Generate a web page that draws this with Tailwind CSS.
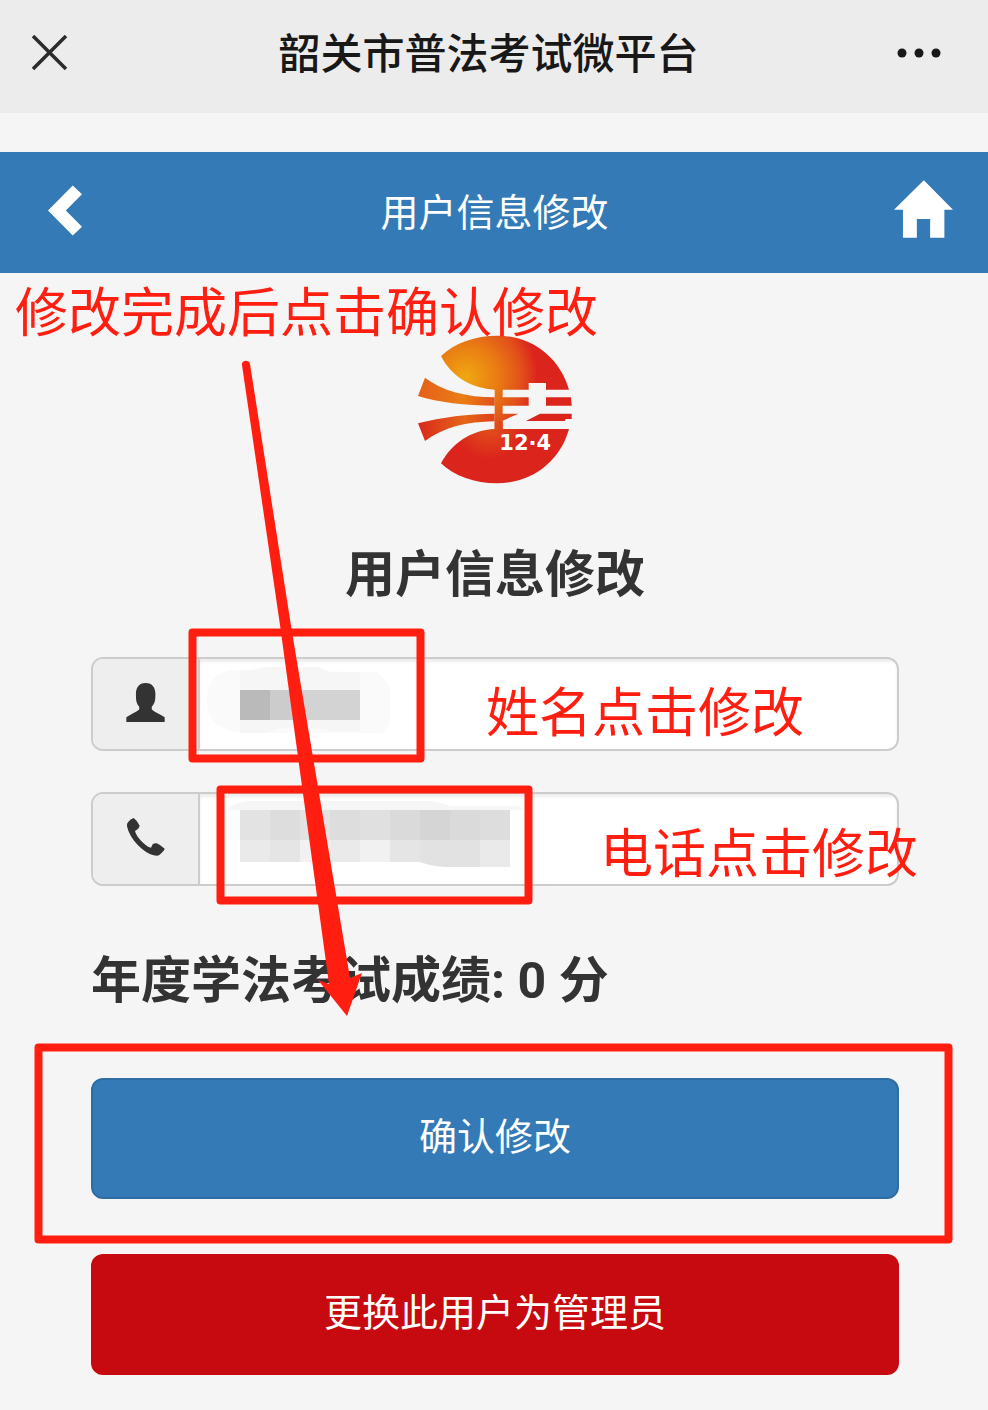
<!DOCTYPE html>
<html lang="zh-CN">
<head>
<meta charset="utf-8">
<meta name="viewport" content="width=device-width, initial-scale=1">
<title>韶关市普法考试微平台</title>
<script src="https://cdn.jsdelivr.net/npm/@tailwindcss/browser@4"></script>
</head>
<body class="relative min-h-screen overflow-x-hidden bg-[#f5f5f5] pb-9 font-['Roboto','Noto_Sans_CJK_SC',sans-serif] text-[#333333]">

  <header class="flex h-[113px] items-center justify-between bg-[#ececec] pr-[47px] pb-2 pl-8">
    <button type="button" aria-label="关闭" class="w-12">
      <svg class="size-9" viewBox="0 0 36 36" fill="none" stroke="#2b2b2b" stroke-width="3.500"><path d="M1 1 34 34M34 1 1 34"/></svg>
    </button>
    <p class="pt-1 text-[42px] leading-[48px] font-medium text-[#181818]">韶关市普法考试微平台</p>
    <button type="button" aria-label="更多">
      <svg class="h-3 w-11" viewBox="0 0 44 12" fill="#181818"><circle cx="5" cy="6" r="4.5"/><circle cx="22" cy="6" r="4.5"/><circle cx="39" cy="6" r="4.5"/></svg>
    </button>
  </header>

  <nav class="mt-[39px] flex h-[121px] items-center justify-between bg-[#337ab7] pr-[35px] pb-1 pl-12 text-white">
    <a href="#" aria-label="返回" class="w-[59px]">
      <svg class="h-[51px] w-[34px]" viewBox="0 0 103 152" fill="currentColor"><path d="M75 0 103 27 54 76 103 125 75 152 0 76Z"/></svg>
    </a>
    <h1 class="pt-1 pr-3 text-[38px] leading-none">用户信息修改</h1>
    <a href="#" aria-label="首页" class="pb-1">
      <svg class="h-[58px] w-[59px]" viewBox="0 0 178 173" fill="currentColor"><path d="M90 0 178 89H152V173H109V117H69V173H27V89H0Z"/></svg>
    </a>
  </nav>

  <main class="pt-[47px] pr-[89px] pl-[91px]">
    <svg class="mx-auto h-[180px] w-[190px]" viewBox="0 0 570 540" role="img" aria-label="12·4 普法">
      <defs>
        <radialGradient id="sun" gradientUnits="userSpaceOnUse" cx="198" cy="170" r="215">
          <stop offset="0" stop-color="#f0a812"/><stop offset=".45" stop-color="#e97b13"/><stop offset=".78" stop-color="#e2501a"/><stop offset="1" stop-color="#db241c"/>
        </radialGradient>
        <linearGradient id="ray" x1="0" x2="1"><stop offset="0" stop-color="#e5601a"/><stop offset=".6" stop-color="#ea7d15"/><stop offset="1" stop-color="#e2501a"/></linearGradient>
        <linearGradient id="ray2" x1="0" x2="1"><stop offset="0" stop-color="#da281c"/><stop offset=".6" stop-color="#e56518"/><stop offset="1" stop-color="#df421a"/></linearGradient>
        <radialGradient id="base" gradientUnits="userSpaceOnUse" cx="270" cy="310" r="110"><stop offset="0" stop-color="#e2551a"/><stop offset="1" stop-color="#db241c"/></radialGradient>
      </defs>
      <path fill="url(#sun)" d="M123 108C165 68 225 47 293 47C395 47 480 113 507 209H438V189H386V209H308V232H386V257H308V281H355L308 302V327H284V209C215 205 155 171 123 108Z"/>
      <path fill="url(#ray)" d="M75 173C125 212 200 232 284 232V257C195 257 115 247 54 228Z"/>
      <path fill="url(#ray2)" d="M54 310C125 291 205 282 284 281V304C200 305 130 322 75 363Z"/>
      <path fill="#db241c" d="M438 232H513L515 257H438ZM420 281H515V297H497L494 303H378Z"/>
      <path fill="url(#base)" d="M284 304H308V327H507C480 425 395 490 290 490C225 490 162 468 123 430C155 370 213 330 284 327Z"/>
      <text x="298" y="391" fill="#ffffff" class="font-['DejaVu_Sans',sans-serif] text-[63px] font-bold">12·4</text>
    </svg>

    <h2 class="mt-[50px] text-center text-[50px] leading-[50px] font-bold">用户信息修改</h2>

    <form class="mt-[57px]">
      <div class="flex h-[94px] overflow-hidden rounded-xl border-2 border-[#cccccc] bg-white">
        <label for="name" class="flex w-[107px] items-center justify-center border-r-2 border-[#cccccc] bg-[#eeeeee] pb-1">
          <svg class="size-[39px]" viewBox="0 0 116 118" fill="#333333" role="img" aria-label="姓名"><path d="M58 0C79 0 88 14 88 34C88 53 86 62 77 72V80C89 91 103 94 116 104V118H0V104C13 94 29 89 39 80V72C30 62 29 51 29 34C29 14 38 0 58 0Z"/></svg>
        </label>
        <input id="name" type="text" class="min-w-0 flex-1 px-6 text-[38px] shadow-[inset_0_3px_3px_rgba(0,0,0,0.075)] outline-none">
      </div>

      <div class="mt-[41px] flex h-[94px] overflow-hidden rounded-xl border-2 border-[#cccccc] bg-white">
        <label for="phone" class="flex w-[107px] items-center justify-center border-r-2 border-[#cccccc] bg-[#eeeeee] pb-1">
          <svg class="size-[38px]" viewBox="0 0 114 114" fill="#333333" role="img" aria-label="电话"><path d="M20 0Q31 8 38 23Q37 31 24 39Q27 52 42 68Q59 86 72 89L77 79Q84 74 89 76Q101 81 113 92Q112 98 97 111Q92 115 77 111Q57 106 33 82Q6 54 0 25Q-1 17 3 13Q10 3 20 0Z"/></svg>
        </label>
        <input id="phone" type="tel" class="min-w-0 flex-1 px-6 text-[38px] shadow-[inset_0_3px_3px_rgba(0,0,0,0.075)] outline-none">
      </div>

      <p class="mt-[70px] text-[50px] leading-[50px] font-bold">年度学法考试成绩: 0 分</p>

      <button type="submit" class="mt-[72px] block h-[121px] w-full rounded-xl border-2 border-[#2e6da4] bg-[#337ab7] pb-0.5 text-[38px] text-white">确认修改</button>
      <button type="button" class="mt-[55px] block h-[121px] w-full rounded-xl bg-[#c70a10] pb-0.5 text-[38px] text-white">更换此用户为管理员</button>
    </form>
  </main>

  <!-- Annotation layer: masked values, highlight frames, arrow and notes -->
  <div class="pointer-events-none absolute top-0 left-0 h-[1410px] w-[988px] font-['Noto_Sans_CJK_SC',sans-serif] text-[53px] leading-[54px] whitespace-nowrap text-[#ff1e10]">
    <svg class="absolute inset-0 size-full" viewBox="0 0 988 1410" aria-hidden="true">
      <path fill="#fafafa" d="M240 670C216 669 207 682 207 702C207 720 220 731 244 733H382L390 725V687L378 672Z"/>
      <path fill="#f6f6f6" d="M240 670H252Q262 667 270 667H318Q326 670 330 672H360V731H330Q316 728 308 728H280Q272 731 264 733H240Z"/>
      <path fill="#bababa" d="M240 690h30v30h-30z"/>
      <path fill="#cccccc" d="M270 690h30v30h-30z"/>
      <path fill="#d3d3d3" d="M300 690h60v30h-60z"/>
      <path fill="#f6f6f6" d="M227 810Q235 801 250 801H430Q441 802 450 806H518L524 810Z"/>
      <path fill="#fcfcfc" d="M225 810h15v30h-15z"/>
      <path fill="#e3e3e3" d="M240 810h30v30h-30zM300 810h30v30h-30z"/>
      <path fill="#dddddd" d="M270 810h30v30h-30zM330 810h30v30h-30zM480 810h30v30h-30z"/>
      <path fill="#e0e0e0" d="M360 810h30v30h-30z"/>
      <path fill="#dadada" d="M390 810h30v30h-30zM450 810h30v30h-30z"/>
      <path fill="#d5d5d5" d="M420 810h30v30h-30z"/>
      <path fill="#eaeaea" d="M240 840h30v22h-30zM330 840h30v22h-30zM480 840h30v27h-30z"/>
      <path fill="#e5e5e5" d="M270 840h30v22h-30zM390 840h30v22h-30z"/>
      <path fill="#f1f1f1" d="M300 840h30v22h-30zM360 840h30v22h-30z"/>
      <path fill="#e2e2e2" d="M420 840H480V867H445Q430 866 420 862Z"/>
      <g fill="none" stroke="#ff1e10" stroke-width="8" stroke-linejoin="round">
        <path d="M192.500 632.500H420.500V758.500H192.500Z"/>
        <path d="M220.500 789.500H528.500V900.500H220.500Z"/>
        <path d="M38.500 1047.500H948.500V1239.500H38.500Z"/>
      </g>
      <path fill="#ff1e10" d="M242 365C241 360 249 359 250 364L292 632L350 978L362 973L347 1016L318 980L329 984L280 625Z"/>
    </svg>
    <p class="absolute top-[282px] left-[15px]">修改完成后点击确认修改</p>
    <p class="absolute top-[682px] left-[486px]">姓名点击修改</p>
    <p class="absolute top-[823px] left-[600px]">电话点击修改</p>
  </div>
</body>
</html>
